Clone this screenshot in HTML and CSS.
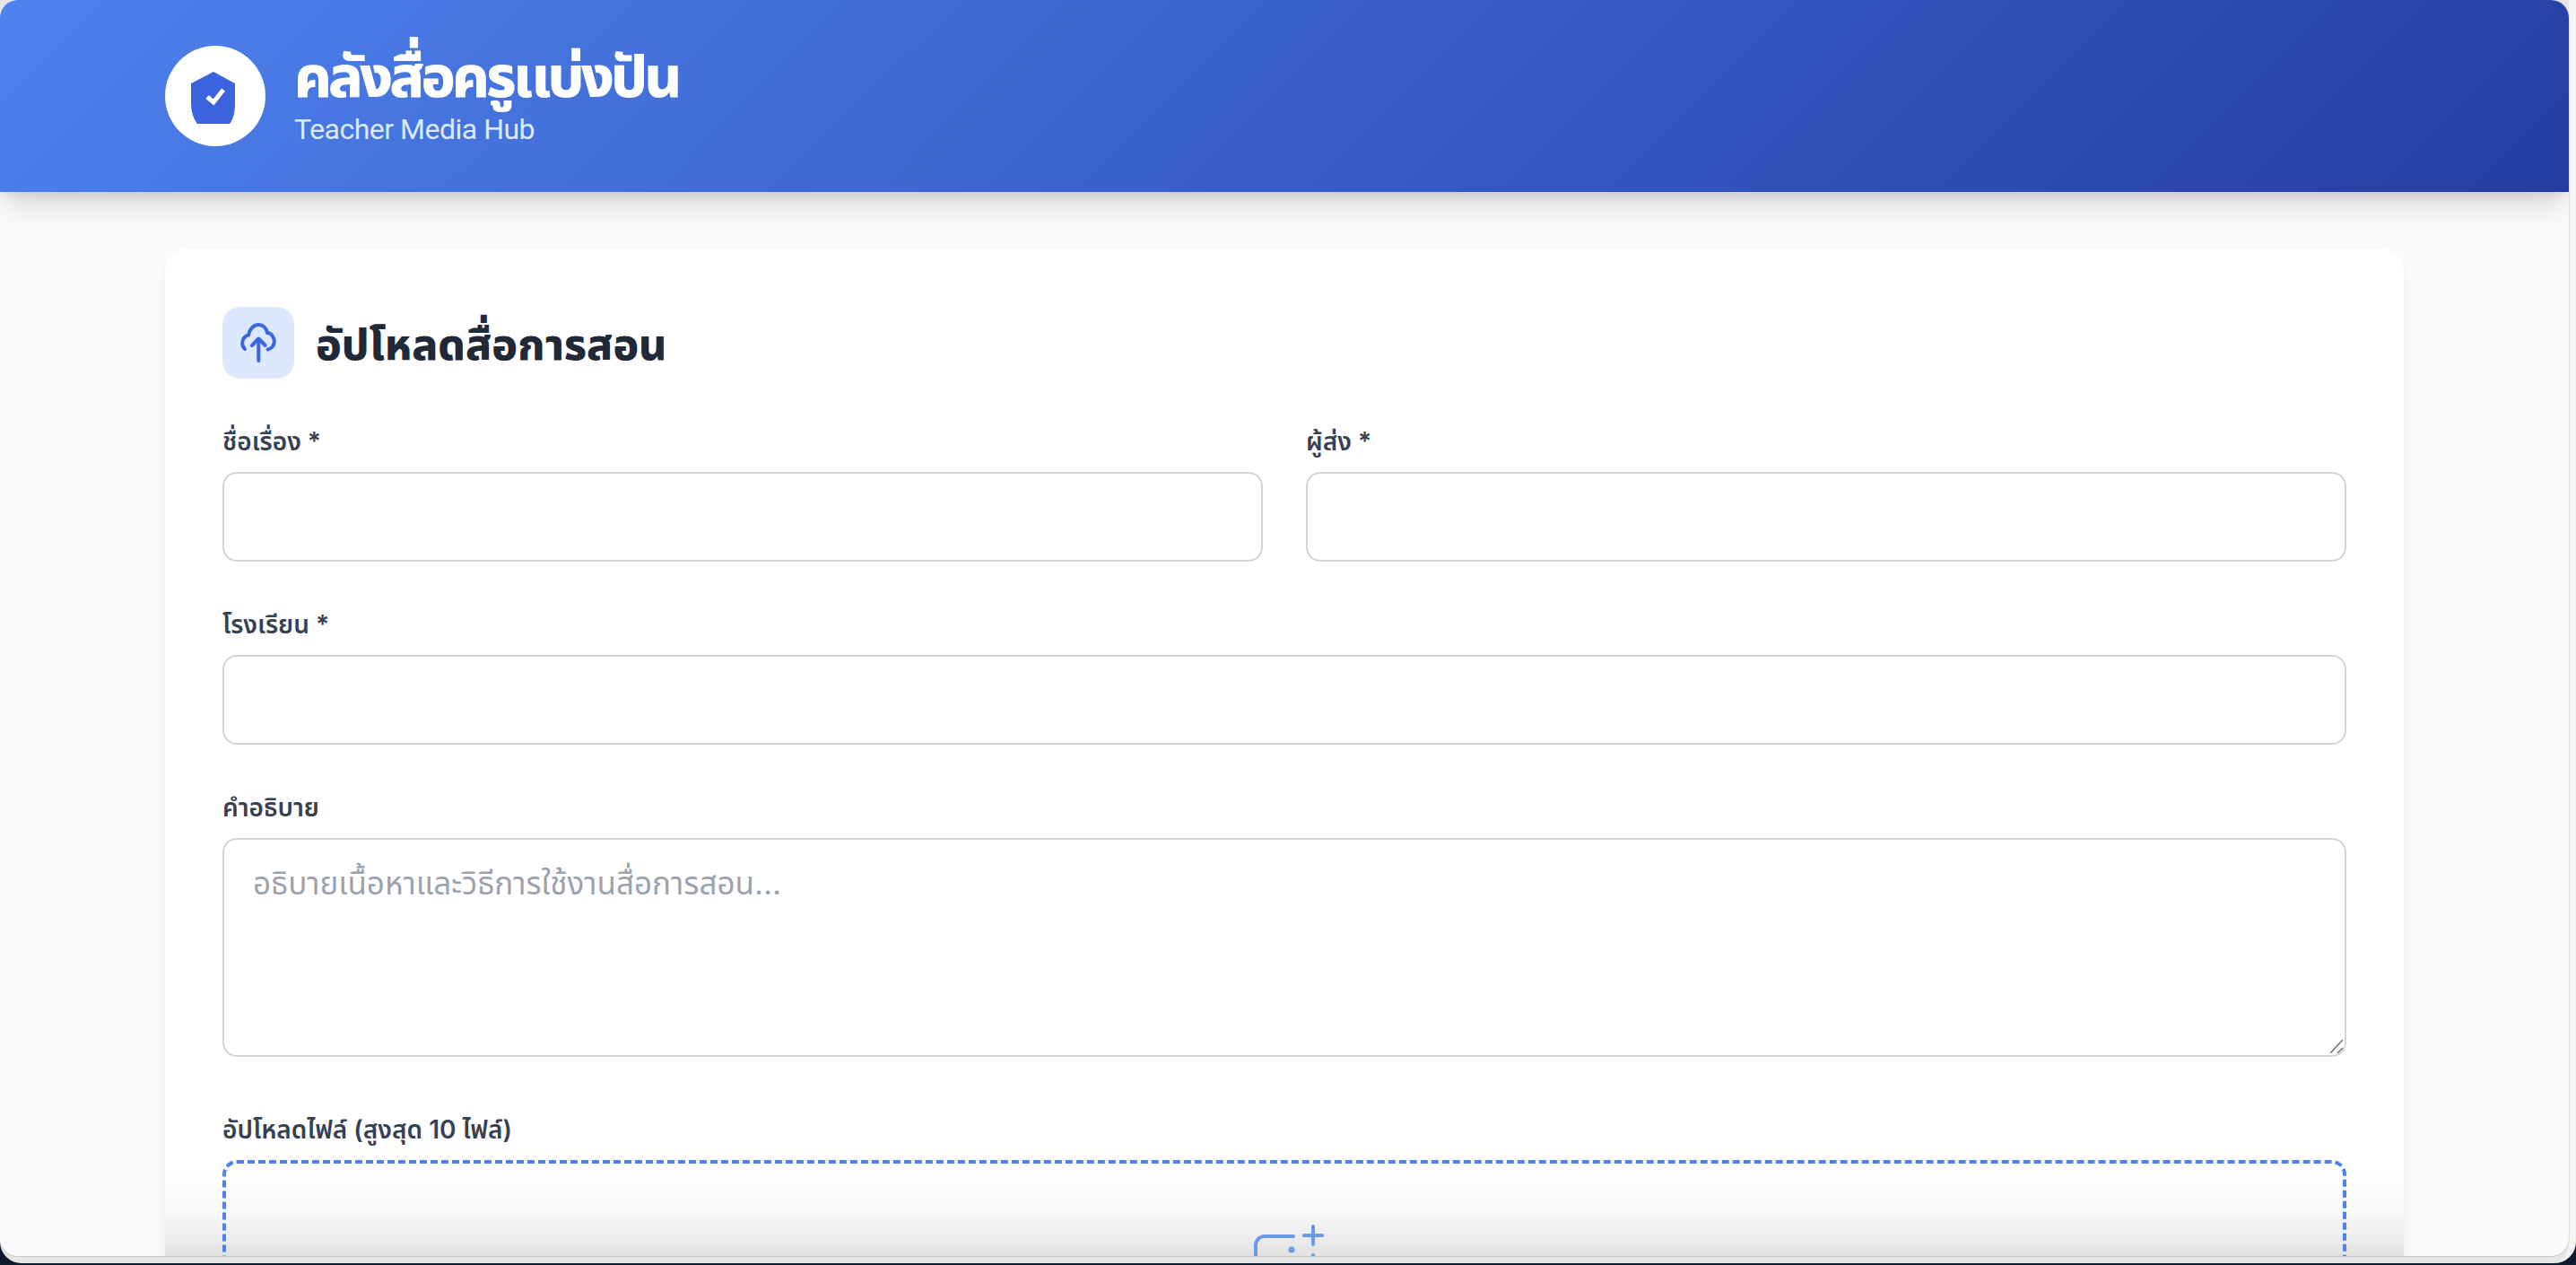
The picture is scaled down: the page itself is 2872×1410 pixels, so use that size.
FILE: index.html
```html
<!DOCTYPE html>
<html lang="en">

<head>
  <meta charset="UTF-8" />
  <meta name="viewport" content="width=device-width, initial-scale=1.0" />
  <title>Teacher Media Hub</title>
  <link rel="stylesheet" href="styles.css">
</head>

<body>
  <div class="screen">
    <div class="window">
      <header class="header">
        <div class="logo">
          <svg class="logo-mark" width="50" height="60" viewBox="0 0 50 60">
            <path d="M25 1 L0 14 V36 C0 46 3 54 7 59 H43 C47 54 49 46 49 36 V14 Z" fill="#3b63e0" />
            <path d="M18 29 L25 35 L36 21" fill="none" stroke="#fff" stroke-width="5" />
          </svg>
        </div>
        <div>
          <h1 class="brand-title">คลังสื่อครูแบ่งปัน</h1>
          <p class="brand-sub">Teacher Media Hub</p>
        </div>
      </header>

      <main class="content">
        <section class="card">
          <div class="card-head">
            <div class="card-icon">
              <svg width="48" height="48" viewBox="0 0 48 48" fill="none" stroke="#3b66e0" stroke-width="4" stroke-linecap="round" stroke-linejoin="round">
                <path d="M9 31C7 29.5 6.2 27 6.2 24.5C6.2 19.5 9.5 16 13 15.5C14 9 18.5 4 24 4C29.5 4 33 8 34 13C38.5 13 41.8 18 41.8 23C41.8 27.5 38 31 34.5 31.5" />
                <path d="M24.3 20V44" />
                <path d="M17 27L24.3 19.5L31.7 27" />
              </svg>
            </div>
            <h2 class="card-title">อัปโหลดสื่อการสอน</h2>
          </div>

          <div class="two-col">
            <div class="field">
              <label class="label">ชื่อเรื่อง *</label>
              <input class="input" type="text">
            </div>
            <div class="field">
              <label class="label">ผู้ส่ง *</label>
              <input class="input" type="text">
            </div>
          </div>

          <div class="field">
            <label class="label">โรงเรียน *</label>
            <input class="input" type="text">
          </div>

          <div class="field field-textarea">
            <label class="label">คำอธิบาย</label>
            <div class="textarea-wrap">
              <textarea class="input textarea" placeholder="อธิบายเนื้อหาและวิธีการใช้งานสื่อการสอน..."></textarea>
              <svg class="grip" width="16" height="16" viewBox="0 0 16 16" fill="none" stroke="#6b6b6b" stroke-width="1.5">
                <path d="M2 16L16 1" />
                <path d="M10 16L16 10" />
              </svg>
            </div>
          </div>

          <div class="field">
            <label class="label">อัปโหลดไฟล์ (สูงสุด 10 ไฟล์)</label>
            <div class="dropzone">
              <svg width="96" height="96" viewBox="0 0 96 96" fill="none" stroke="#6a9be9" stroke-width="4" stroke-linecap="round">
                <path d="M58 17H26a10 10 0 0 0-10 10v70" />
                <path d="M70 16h20M80 6v20" />
                <path d="M80 38v10" />
                <circle cx="56" cy="32" r="1.5" />
              </svg>
            </div>
          </div>
        </section>
      </main>
    </div>
  </div>
</body>

</html>
```

FILE: styles.css
```css
* {
  margin: 0;
  padding: 0;
  box-sizing: border-box;
}

html,
body {
  height: 100%;
  overflow: hidden;
}

body {
  font-family: "Inter", "Noto Sans", "Noto Sans Thai", sans-serif;
  background-color: #0f1a2a;
  color: #1f2937;
}

.screen {
  height: 1408px;
  background-color: #e6e6e6;
  border-radius: 0 0 24px 24px;
  border-right: 8px solid #f4f4f4;
}

.window {
  height: 1400px;
  overflow: hidden;
  background-color: #f9fafb;
  border-radius: 20px;
  box-shadow: 0 1px 0 #c8c8c8, 1px 0 0 #dcdcdc;
}

.header {
  height: 214px;
  padding: 0 184px;
  display: flex;
  align-items: center;
  gap: 32px;
  color: #fff;
  background: linear-gradient(135deg, #4e82ef, #253da0);
  box-shadow: 0 20px 30px -6px rgba(0, 0, 0, 0.14), 0 8px 12px -6px rgba(0, 0, 0, 0.1);
}

.logo {
  width: 112px;
  height: 112px;
  border-radius: 50%;
  background-color: #fff;
  display: flex;
  align-items: center;
  justify-content: center;
}

.logo-mark {
  margin: 4px 4px 0 0;
}

.brand-title {
  font-size: 64px;
  line-height: 70px;
  font-weight: 800;
  letter-spacing: -3.8px;
}

.brand-sub {
  padding-top: 4px;
  font-family: "Roboto", sans-serif;
  font-size: 32px;
  line-height: 40px;
  letter-spacing: -0.5px;
  color: #dbeafe;
}

.content {
  padding: 64px 184px 0;
}

.card {
  width: 2496px;
  padding: 64px;
  border-radius: 24px;
  background: linear-gradient(#fff 1022px, #f8f8f8 1072px, #ebebeb 1105px, #e0e0e0 1122px);
  box-shadow: 0 8px 12px -2px rgba(0, 0, 0, 0.05), 0 4px 8px -2px rgba(0, 0, 0, 0.04);
}

.card-head {
  display: flex;
  align-items: center;
  gap: 24px;
  margin-bottom: 48px;
}

.card-icon {
  width: 80px;
  height: 80px;
  border-radius: 20px;
  background-color: #dbe8fe;
  display: flex;
  align-items: center;
  justify-content: center;
}

.card-title {
  padding-top: 4px;
  font-size: 48px;
  line-height: 64px;
  font-weight: 800;
}

.two-col {
  display: grid;
  grid-template-columns: 1fr 1fr;
  gap: 48px;
}

.field {
  margin-bottom: 48px;
}

.field-textarea {
  margin-bottom: 59px;
}

.label {
  display: block;
  margin-bottom: 14px;
  padding-top: 2px;
  font-size: 28px;
  line-height: 40px;
  font-weight: 600;
  color: #374151;
}

.input {
  display: block;
  width: 100%;
  height: 100px;
  padding: 24px 32px;
  font-family: inherit;
  font-size: 35px;
  line-height: 48px;
  background-color: #fff;
  border: 2px solid #d1d5db;
  border-radius: 16px;
  outline: none;
}

.textarea-wrap {
  position: relative;
}

.textarea {
  height: 244px;
  resize: none;
}

.textarea::placeholder {
  color: #9ca3af;
}

.grip {
  position: absolute;
  right: 4px;
  bottom: 4px;
}

.dropzone {
  height: 400px;
  padding-top: 64px;
  border: 4px dashed #4f80ed;
  border-radius: 16px;
  display: flex;
  justify-content: center;
}
```
